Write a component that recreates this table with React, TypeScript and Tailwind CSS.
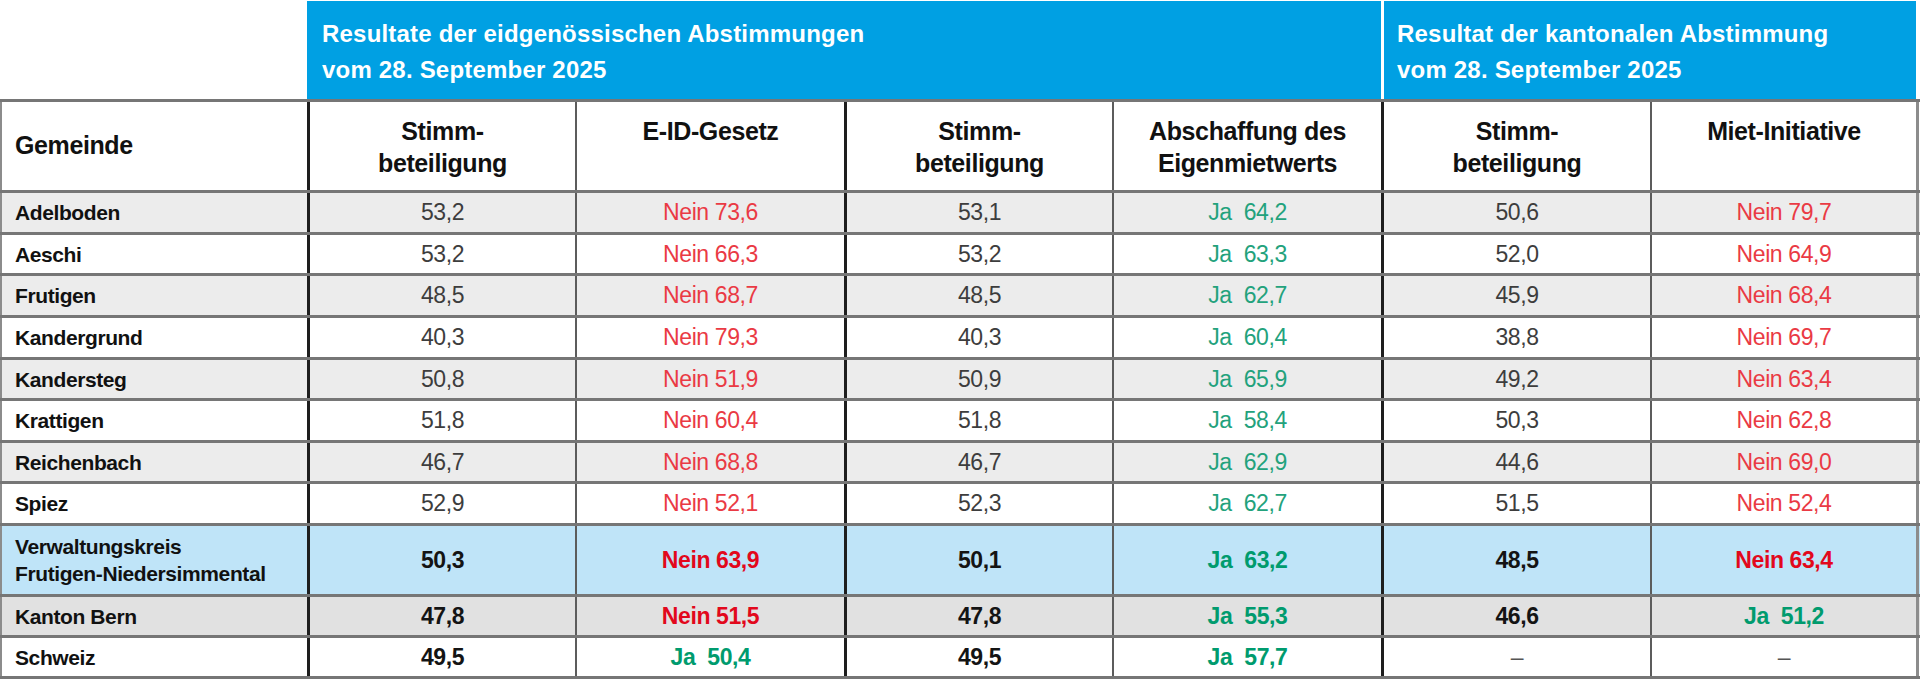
import React from "react"

type Vote = { ja: boolean; value: string } | null

type Row = {
  name: string[]
  turnout1: string
  eid: Vote
  turnout2: string
  mietwert: Vote
  turnout3: string
  miet: Vote
  bg: string
  bold?: boolean
  h: string
}

const N = (value: string): Vote => ({ ja: false, value })
const J = (value: string): Vote => ({ ja: true, value })

const rows: Row[] = [
  { name: ["Adelboden"], turnout1: "53,2", eid: N("73,6"), turnout2: "53,1", mietwert: J("64,2"), turnout3: "50,6", miet: N("79,7"), bg: "bg-[#ececec]", h: "h-[42px]" },
  { name: ["Aeschi"], turnout1: "53,2", eid: N("66,3"), turnout2: "53,2", mietwert: J("63,3"), turnout3: "52,0", miet: N("64,9"), bg: "bg-white", h: "h-[41px]" },
  { name: ["Frutigen"], turnout1: "48,5", eid: N("68,7"), turnout2: "48,5", mietwert: J("62,7"), turnout3: "45,9", miet: N("68,4"), bg: "bg-[#ececec]", h: "h-[42px]" },
  { name: ["Kandergrund"], turnout1: "40,3", eid: N("79,3"), turnout2: "40,3", mietwert: J("60,4"), turnout3: "38,8", miet: N("69,7"), bg: "bg-white", h: "h-[42px]" },
  { name: ["Kandersteg"], turnout1: "50,8", eid: N("51,9"), turnout2: "50,9", mietwert: J("65,9"), turnout3: "49,2", miet: N("63,4"), bg: "bg-[#ececec]", h: "h-[41px]" },
  { name: ["Krattigen"], turnout1: "51,8", eid: N("60,4"), turnout2: "51,8", mietwert: J("58,4"), turnout3: "50,3", miet: N("62,8"), bg: "bg-white", h: "h-[42px]" },
  { name: ["Reichenbach"], turnout1: "46,7", eid: N("68,8"), turnout2: "46,7", mietwert: J("62,9"), turnout3: "44,6", miet: N("69,0"), bg: "bg-[#ececec]", h: "h-[41px]" },
  { name: ["Spiez"], turnout1: "52,9", eid: N("52,1"), turnout2: "52,3", mietwert: J("62,7"), turnout3: "51,5", miet: N("52,4"), bg: "bg-white", h: "h-[42px]" },
  { name: ["Verwaltungskreis", "Frutigen-Niedersimmental"], turnout1: "50,3", eid: N("63,9"), turnout2: "50,1", mietwert: J("63,2"), turnout3: "48,5", miet: N("63,4"), bg: "bg-[#bfe4f8]", bold: true, h: "h-[71px]" },
  { name: ["Kanton Bern"], turnout1: "47,8", eid: N("51,5"), turnout2: "47,8", mietwert: J("55,3"), turnout3: "46,6", miet: J("51,2"), bg: "bg-[#e1e1e1]", bold: true, h: "h-[41px]" },
  { name: ["Schweiz"], turnout1: "49,5", eid: J("50,4"), turnout2: "49,5", mietwert: J("57,7"), turnout3: "–", miet: null, bg: "bg-white", bold: true, h: "h-[41px]" },
]

// column widths incl. their right border
const cols = [
  "w-[310px] shrink-0 border-l-2 border-l-[#8c8c8c] border-r-[3px] border-r-[#1e1e1e]",
  "w-[267px] shrink-0 border-r-2 border-r-[#5c5c5c]",
  "w-[270px] shrink-0 border-r-[3px] border-r-[#1e1e1e]",
  "w-[267px] shrink-0 border-r-2 border-r-[#5c5c5c]",
  "w-[270px] shrink-0 border-r-[3px] border-r-[#1e1e1e]",
  "w-[268px] shrink-0 border-r-2 border-r-[#5c5c5c]",
  "w-[267px] shrink-0 border-r-[3px] border-r-[#8c8c8c]",
]

function VoteText({ vote, bold }: { vote: Vote; bold?: boolean }) {
  if (!vote) return <span className="text-[#555]">–</span>
  if (vote.ja) {
    return (
      <span className={bold ? "font-bold text-[#009b6e]" : "text-[#23a27c]"}>
        Ja{"\u00a0\u00a0"}{vote.value}
      </span>
    )
  }
  return (
    <span className={bold ? "font-bold text-[#e2081c]" : "text-[#ea3a44]"}>
      Nein {vote.value}
    </span>
  )
}

function Num({ value, bold }: { value: string; bold?: boolean }) {
  if (value === "–") return <span className="text-[#555]">–</span>
  return <span className={bold ? "font-bold text-[#141414]" : "text-[#3d3d3d]"}>{value}</span>
}

export default function App() {
  const headers = [
    ["Stimm-", "beteiligung"],
    ["E-ID-Gesetz"],
    ["Stimm-", "beteiligung"],
    ["Abschaffung des", "Eigenmietwerts"],
    ["Stimm-", "beteiligung"],
    ["Miet-Initiative"],
  ]

  return (
    <div className="w-[1920px] h-[679px] bg-white font-['Liberation_Sans',Arial,sans-serif] overflow-hidden">
      {/* Blue group titles */}
      <div className="flex h-[99px] pt-[1px]">
        <div className="w-[307px] shrink-0" />
        <div className="w-[1074px] shrink-0 bg-[#00a0e3] pl-[15px] pt-[15px] text-white font-bold text-[24px] leading-[36px] tracking-[0.2px]">
          <div>Resultate der eidgenössischen Abstimmungen</div>
          <div>vom 28. September 2025</div>
        </div>
        <div className="w-[3px] shrink-0" />
        <div className="w-[532px] shrink-0 bg-[#00a0e3] pl-[13px] pt-[15px] text-white font-bold text-[24px] leading-[36px] tracking-[0.2px]">
          <div>Resultat der kantonalen Abstimmung</div>
          <div>vom 28. September 2025</div>
        </div>
      </div>

      {/* Table */}
      <div className="border-t-[3px] border-t-[#767676]">
        <div className="flex h-[91px] border-b-[3px] border-b-[#767676] text-[#111] font-bold text-[25px] tracking-[-0.4px]">
          <div className={`${cols[0]} flex items-center pl-[13px]`}>Gemeinde</div>
          {headers.map((lines, i) => (
            <div key={i} className={`${cols[i + 1]} pt-[13px] text-center leading-[32px]`}>
              {lines.map((l) => (
                <div key={l}>{l}</div>
              ))}
            </div>
          ))}
        </div>

        {rows.map((r) => (
          <div key={r.name[0]} className={`flex ${r.h} ${r.bg} border-b-[3px] border-b-[#767676] text-[23px] tracking-[-0.4px]`}>
            <div className={`${cols[0]} flex flex-col justify-center pl-[13px] font-bold text-[21px] leading-[27px] tracking-[-0.4px] text-[#111]`}>
              {r.name.map((n) => (
                <div key={n}>{n}</div>
              ))}
            </div>
            <div className={`${cols[1]} flex items-center justify-center`}>
              <Num value={r.turnout1} bold={r.bold} />
            </div>
            <div className={`${cols[2]} flex items-center justify-center`}>
              <VoteText vote={r.eid} bold={r.bold} />
            </div>
            <div className={`${cols[3]} flex items-center justify-center`}>
              <Num value={r.turnout2} bold={r.bold} />
            </div>
            <div className={`${cols[4]} flex items-center justify-center`}>
              <VoteText vote={r.mietwert} bold={r.bold} />
            </div>
            <div className={`${cols[5]} flex items-center justify-center`}>
              <Num value={r.turnout3} bold={r.bold} />
            </div>
            <div className={`${cols[6]} flex items-center justify-center`}>
              <VoteText vote={r.miet} bold={r.bold} />
            </div>
          </div>
        ))}
      </div>
    </div>
  )
}
